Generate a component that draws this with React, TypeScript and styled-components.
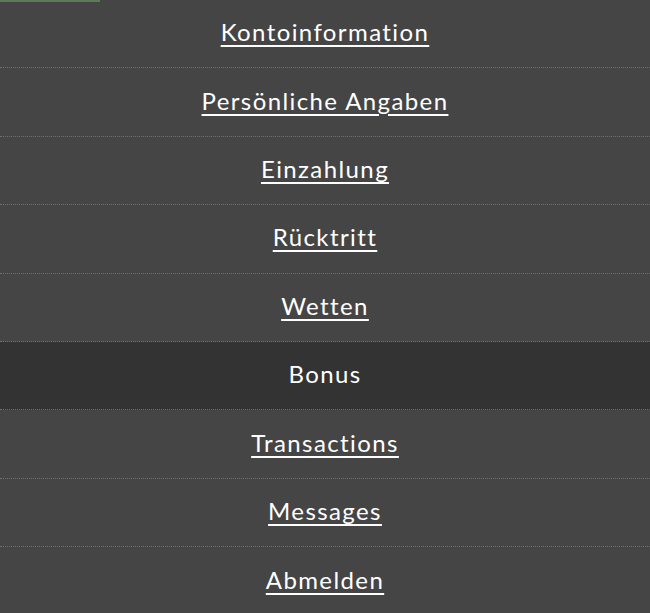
import React from "react";
import styled, { createGlobalStyle } from "styled-components";

const Global = createGlobalStyle`
  html, body { margin: 0; padding: 0; background: #454545; }
  body { font-family: "Lato", "Open Sans", sans-serif; }
`;

const Menu = styled.nav`
  position: relative;
  width: 650px;
  height: 613px;
  background: #454545;
  overflow: hidden;
  display: flex;
  flex-direction: column;
`;

const TopAccent = styled.div`
  position: absolute;
  top: 0;
  left: 0;
  width: 100px;
  height: 2px;
  background: #5d7a58;
`;

const Row = styled.div<{ $active?: boolean }>`
  box-sizing: border-box;
  height: 68.4px;
  flex: 0 0 68.4px;
  display: flex;
  align-items: center;
  justify-content: center;
  padding-bottom: 4px;
  background: ${(p) => (p.$active ? "#333333" : "transparent")};
  border-bottom: 1px dotted #707070;
  &:last-child { border-bottom: none; }
`;

const Link = styled.a<{ $active?: boolean }>`
  color: #ffffff;
  font-size: 24px;
  font-weight: 400;
  letter-spacing: 1.4px;
  text-decoration: ${(p) => (p.$active ? "none" : "underline")};
  text-decoration-thickness: 2px;
  text-underline-offset: 4px;
  cursor: pointer;
`;

const items = [
  "Kontoinformation",
  "Persönliche Angaben",
  "Einzahlung",
  "Rücktritt",
  "Wetten",
  "Bonus",
  "Transactions",
  "Messages",
  "Abmelden",
];

export default function App() {
  return (
    <>
      <Global />
      <Menu>
        <TopAccent />
        {items.map((it) => {
          const active = it === "Bonus";
          return (
            <Row key={it} $active={active}>
              <Link $active={active}>{it}</Link>
            </Row>
          );
        })}
      </Menu>
    </>
  );
}
